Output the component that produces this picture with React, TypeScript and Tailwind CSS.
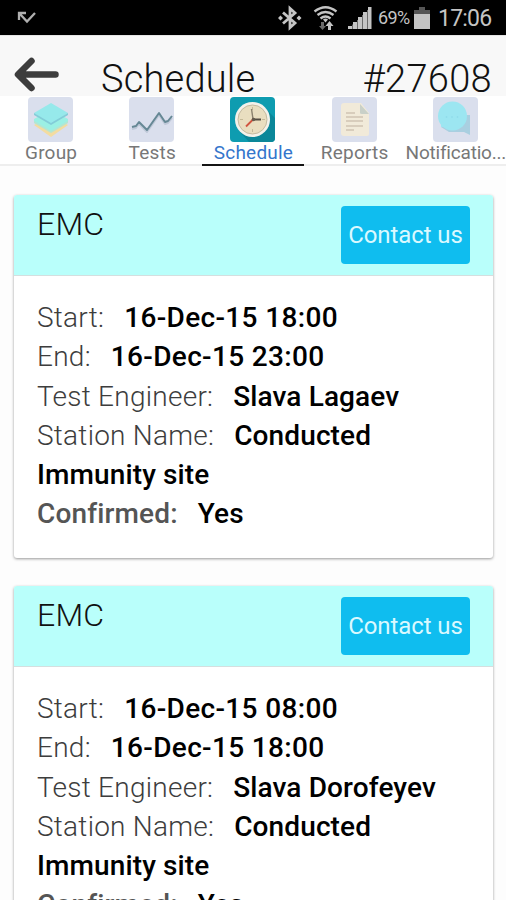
import { ReactNode } from 'react';

interface Booking {
  start: string;
  end: string;
  engineer: string;
  station: string;
  confirmed: string;
}

const bookings: Booking[] = [
  {
    start: '16-Dec-15 18:00',
    end: '16-Dec-15 23:00',
    engineer: 'Slava Lagaev',
    station: 'Conducted Immunity site',
    confirmed: 'Yes',
  },
  {
    start: '16-Dec-15 08:00',
    end: '16-Dec-15 18:00',
    engineer: 'Slava Dorofeyev',
    station: 'Conducted Immunity site',
    confirmed: 'Yes',
  },
];

function StatusBar() {
  return (
    <div className="h-[35px] shrink-0 bg-black flex items-center text-[#c4c4c4]">
      {/* Missed call */}
      <svg className="ml-[17px]" width="20" height="14" viewBox="0 0 20 14" fill="none" stroke="#b0b0b0" strokeWidth="2.3">
        <path d="M2 9V2h7M2.5 2.5l7.5 8L18 2" />
      </svg>

      {/* Bluetooth */}
      <svg className="ml-[241px]" width="24" height="26" viewBox="0 0 24 26" fill="none" stroke="#c4c4c4" strokeWidth="2.8">
        <path d="M5 7.500l12 10.500-5 4.500v-19l5 4.500L5 18.500" />
        <path d="M0 13l2.500-2.500L5 13l-2.500 2.500zM18.500 13l2.500-2.500 2.500 2.500-2.500 2.500z" fill="#c4c4c4" stroke="none" />
      </svg>

      {/* Wifi with transfer arrows */}
      <svg className="ml-[11px]" width="26" height="26" viewBox="0 0 26 26" fill="none" stroke="#c4c4c4" strokeWidth="2.3">
        <path d="M1.500 6.500q11-8.500 22 0M4.500 10q8-6 16 0M7.500 13.500q5-4 10 0" />
        <path d="M10 14.500q2.500-2 5 0l-2.500 3z" fill="#c4c4c4" stroke="none" />
        <path d="M8 17h3v4h2l-3.500 4L6 21h2z" fill="#6a6a6a" stroke="none" />
        <path d="M15 25v-4h-2.500l4-5 4 5H18v4z" fill="#c4c4c4" stroke="none" />
      </svg>

      {/* Signal */}
      <svg className="ml-[8px]" width="25" height="24" viewBox="0 0 25 24">
        <path d="M1 20h4v3H1zM6 16h4v7H6zM11 11h4v12h-4zM16 6h4v17h-4zM21 1h3.500v22H21z" fill="#c4c4c4" />
        <path d="M5 18.500h1V23H5zM10 14h1v9h-1zM15 9h1v14h-1zM20 4h1v19h-1z" fill="#6a6a6a" />
      </svg>

      <span className="ml-[6px] w-[33px] text-[18px] tracking-[-0.6px]">69%</span>
      <svg className="ml-[3px]" width="16" height="24" viewBox="0 0 16 24">
        <path d="M5 1h6v3h5v4H0V4h5z" fill="#555" />
        <path d="M0 8h16v15H0z" fill="#c4c4c4" />
      </svg>
      <span className="ml-[8px] mt-[3px] text-[23px] tracking-[-0.8px]">17:06</span>
    </div>
  );
}

function Header() {
  return (
    <header className="h-[61px] shrink-0 bg-[#f8f8f8] flex items-start pl-[14px] pr-[14px] border-t border-[#e5e5e5]">
      <svg className="mt-[20px]" width="46" height="36" viewBox="0 0 46 36" fill="none" stroke="#3d3d3d" strokeWidth="6.500" strokeLinecap="round" strokeLinejoin="round">
        <path d="M17.500 5L4 18.500l13.500 13.500M5 18.500h36.500" />
      </svg>
      <h1 className="ml-[41px] mt-[18px] text-[38px] leading-[50px] tracking-[0.2px] font-light text-[#111]">Schedule</h1>
      <span className="ml-auto mt-[18px] text-[38px] leading-[50px] tracking-[0.3px] font-light text-[#111]">#27608</span>
    </header>
  );
}

function GroupIcon() {
  return (
    <svg width="45" height="45" viewBox="0 0 45 45">
      <rect width="45" height="45" rx="4" fill="#dadfed" />
      <path d="M6 28l17-9 17 9-17 12z" fill="#f3dca0" />
      <path d="M6 22l17-9 17 9v3L23 35 6 25z" fill="#9bf0e4" />
      <path d="M6 24l17 10 17-10v2L23 36 6 26z" fill="#b5e5d0" />
      <path d="M6 16L23 6l17 10-17 11z" fill="#96e9eb" />
      <path d="M6 16l17 10 17-10v2L23 28 6 18z" fill="#83cdd8" />
    </svg>
  );
}

function TestsIcon() {
  return (
    <svg width="45" height="45" viewBox="0 0 45 45" fill="none" strokeLinejoin="round">
      <rect width="45" height="45" rx="4" fill="#dadfed" />
      <path d="M3 32l4-1 3-4 8 8 12-17 6 9 3-1 4-5" stroke="#bfc8d8" strokeWidth="2" />
      <path d="M3 30l4-1 3-4 8 8 12-17 6 9 3-1 4-5" stroke="#668895" strokeWidth="2" />
    </svg>
  );
}

function ScheduleIcon() {
  return (
    <svg width="45" height="45" viewBox="0 0 45 45">
      <rect width="45" height="45" rx="4" fill="#0e9cb0" />
      <path d="M35 11l10 10v20q0 4-4 4H19l-9-10z" fill="#0b8799" />
      <circle cx="22.500" cy="22.500" r="17.500" fill="#f4f2ea" />
      <circle cx="22.500" cy="22.500" r="14.500" fill="#e9dec0" stroke="#c4baa0" strokeWidth="1" />
      <path d="M22.500 10v3M22.500 32v3M10 22.500h3M32 22.500h3" stroke="#c4b998" strokeWidth="1" />
      <path d="M21.500 12l1.500 10" stroke="#8a816d" strokeWidth="1.400" />
      <path d="M23 22.500h8" stroke="#544d42" strokeWidth="2" />
      <path d="M24 21.500l-8 8" stroke="#d1543f" strokeWidth="1.800" />
      <circle cx="23.500" cy="22.500" r="1.800" fill="#635b4d" />
    </svg>
  );
}

function ReportsIcon() {
  return (
    <svg width="45" height="45" viewBox="0 0 45 45">
      <rect width="45" height="45" rx="4" fill="#dadfed" />
      <path d="M12 6h17l8 10v21q0 2-2 2H12q-3 0-3-3V9q0-3 3-3z" fill="#f1ead9" />
      <path d="M28 7v9q0 1 2 1h7z" fill="#c9d0c8" />
      <path d="M14 16h9M14 20h17M14 24h17M14 29h17M14 33h8" stroke="#cfc4b2" strokeWidth="1.400" />
    </svg>
  );
}

function NotificationsIcon() {
  return (
    <svg width="45" height="45" viewBox="0 0 45 45">
      <rect width="45" height="45" rx="4" fill="#dadfed" />
      <path d="M31 18h6v20l-6-3H16l-8-5z" fill="#a9cfe0" />
      <circle cx="19.500" cy="19" r="14.500" fill="#9ce6f1" />
      <path d="M8 24v6l7-1z" fill="#9ce6f1" />
      <circle cx="13.500" cy="20" r="0.800" fill="#8cd9e8" />
      <circle cx="19" cy="20" r="0.800" fill="#8cd9e8" />
      <circle cx="24.500" cy="20" r="0.800" fill="#8cd9e8" />
    </svg>
  );
}

function Tab({ icon, label, active = false }: { icon: ReactNode; label: string; active?: boolean }) {
  return (
    <div className={active
      ? 'w-[101.200px] h-full flex flex-col items-center pt-px border-b-2 border-[#141414] text-[#3476cc]'
      : 'w-[101.200px] h-full flex flex-col items-center pt-px border-b-2 border-[#eeeeee] text-[#777]'}
    >
      <div className="shrink-0">{icon}</div>
      <span className={label.length > 10
        ? 'text-[19px] leading-[22px] tracking-[-0.200px] pl-px whitespace-nowrap'
        : 'text-[19px] leading-[22px] tracking-[0.200px] pl-px whitespace-nowrap'}
      >
        {label}
      </span>
    </div>
  );
}

function Field({ label, value, date = false, strong = false }: { label: string; value: string; date?: boolean; strong?: boolean }) {
  return (
    <p>
      <span className={strong
        ? 'font-medium text-[#555] tracking-[0.150px] mr-[20px]'
        : 'font-light text-[#3d3d3d] tracking-[0.250px] mr-[20px]'}
      >
        {label}:
      </span>
      <span className={date ? 'font-medium text-black tracking-[0.350px]' : 'font-medium text-black tracking-[0.120px]'}>
        {value}
      </span>
    </p>
  );
}

function BookingCard({ booking }: { booking: Booking }) {
  return (
    <section className="h-[363px] shrink-0 bg-white rounded-[3px] overflow-hidden shadow-[0_1px_3px_rgba(0,0,0,0.4)]">
      <div className="h-[81px] bg-[#b9fffb] border-b border-[#d5dfdf] flex items-start justify-between pl-[23px] pr-[23px]">
        <h2 className="mt-[8px] text-[32px] leading-[42px] tracking-[0.200px] font-light text-[#111]">EMC</h2>
        <button className="mt-[11px] w-[129px] h-[58px] rounded-[4px] bg-[#0fbdef] text-[24px] tracking-[-0.100px] text-[#daf9ff] whitespace-nowrap">
          Contact us
        </button>
      </div>
      <div className="pt-[22px] pl-[23px] pr-[24px] text-[28px] leading-[39.300px]">
        <Field label="Start" value={booking.start} date />
        <Field label="End" value={booking.end} date />
        <Field label="Test Engineer" value={booking.engineer} />
        <Field label="Station Name" value={booking.station} />
        <Field label="Confirmed" value={booking.confirmed} strong />
      </div>
    </section>
  );
}

export default function App() {
  return (
    <div className="w-[506px] h-[900px] overflow-hidden flex flex-col bg-[#fdfdfd] font-['Roboto',sans-serif]">
      <StatusBar />
      <Header />
      <nav className="h-[70px] shrink-0 flex bg-white">
        <Tab icon={<GroupIcon />} label="Group" />
        <Tab icon={<TestsIcon />} label="Tests" />
        <Tab icon={<ScheduleIcon />} label="Schedule" active />
        <Tab icon={<ReportsIcon />} label="Reports" />
        <Tab icon={<NotificationsIcon />} label="Notificatio..." />
      </nav>
      <main className="flex-1 min-h-0 overflow-hidden flex flex-col gap-[28px] pt-[29px] pl-[14px] pr-[13px]">
        {bookings.map((b, i) => <BookingCard key={i} booking={b} />)}
      </main>
    </div>
  );
}
